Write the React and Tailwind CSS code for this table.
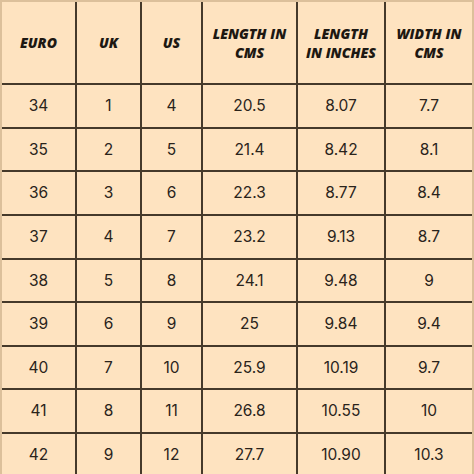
const headers = [
  ["EURO"],
  ["UK"],
  ["US"],
  ["LENGTH IN", "CMS"],
  ["LENGTH", "IN INCHES"],
  ["WIDTH IN", "CMS"],
];

const rows = [
  ["34", "1", "4", "20.5", "8.07", "7.7"],
  ["35", "2", "5", "21.4", "8.42", "8.1"],
  ["36", "3", "6", "22.3", "8.77", "8.4"],
  ["37", "4", "7", "23.2", "9.13", "8.7"],
  ["38", "5", "8", "24.1", "9.48", "9"],
  ["39", "6", "9", "25", "9.84", "9.4"],
  ["40", "7", "10", "25.9", "10.19", "9.7"],
  ["41", "8", "11", "26.8", "10.55", "10"],
  ["42", "9", "12", "27.7", "10.90", "10.3"],
];

const rowHeights = ["h-[44px]", "h-[43px]", "h-[44px]", "h-[44px]", "h-[43px]", "h-[44px]", "h-[43px]", "h-[44px]", "h-[44px]"];

const cols = "grid grid-cols-[75px_65px_61px_95px_88px_86px]";

export default function App() {
  return (
    <div className="w-[474px] h-[474px] overflow-hidden bg-[#fee3c0] border-t-2 border-l-2 border-r-2 border-[#dcc09b] text-[#1d1812]">
      <div className={`${cols} h-[83px]`} style={{ fontFamily: "'Open Sans', 'Liberation Sans', sans-serif" }}>
        {headers.map((h, i) => (
          <div
            key={i}
            className={`flex flex-col items-center justify-center border-b-2 border-[#463a2b] text-[14px] leading-[19px] font-extrabold italic text-center ${i < 5 ? "border-r-2" : ""}`}
          >
            {h.map((line) => (
              <span key={line}>{line}</span>
            ))}
          </div>
        ))}
      </div>

      {rows.map((r, ri) => (
        <div key={ri} className={`${cols} ${rowHeights[ri]}`} style={{ fontFamily: "Inter, 'Liberation Sans', sans-serif" }}>
          {r.map((v, ci) => (
            <div
              key={ci}
              className={`flex items-center justify-center border-b-2 border-[#463a2b] text-[15.5px] text-[#2a231b] ${ci < 5 ? "border-r-2" : ""}`}
            >
              {v}
            </div>
          ))}
        </div>
      ))}
    </div>
  );
}
